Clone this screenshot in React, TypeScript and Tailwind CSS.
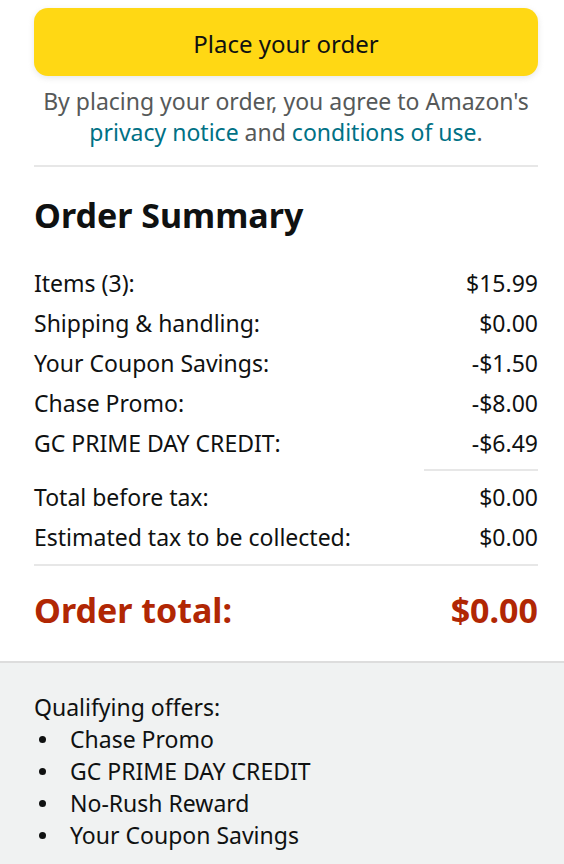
const rows = [
  { label: "Items (3):", value: "$15.99" },
  { label: "Shipping & handling:", value: "$0.00" },
  { label: "Your Coupon Savings:", value: "-$1.50" },
  { label: "Chase Promo:", value: "-$8.00" },
  { label: "GC PRIME DAY CREDIT:", value: "-$6.49" },
];

const taxRows = [
  { label: "Total before tax:", value: "$0.00" },
  { label: "Estimated tax to be collected:", value: "$0.00" },
];

const offers = ["Chase Promo", "GC PRIME DAY CREDIT", "No-Rush Reward", "Your Coupon Savings"];

function Row({ label, value }: { label: string; value: string }) {
  return (
    <div className="flex h-10 items-center justify-between">
      <span>{label}</span>
      <span>{value}</span>
    </div>
  );
}

export default function App(): React.JSX.Element {
  return (
    <div className="min-h-screen bg-white font-['Noto_Sans',sans-serif] text-[23px] text-[#0f1111]">
      <div className="pl-[34px] pr-[26px] pt-2">
        <button className="flex h-[68px] w-full items-center justify-center rounded-[14px] bg-[#ffd814] pt-[3px] text-[24px] shadow-[0_2px_6px_rgba(213,217,217,0.6)]">
          Place your order
        </button>
        <p className="mt-[10px] text-center leading-[31px] text-[#565959]">
          By placing your order, you agree to Amazon's{" "}
          <span className="text-[#007185]">privacy notice</span> and{" "}
          <span className="text-[#007185]">conditions of use</span>.
        </p>
        <div className="mt-[17px] h-[2px] bg-[#e7e7e7]" />

        <h2 className="mt-[26px] text-[34px] font-bold leading-[44px]">Order Summary</h2>

        <div className="mt-[26px]">
          {rows.map((r) => (
            <Row key={r.label} {...r} />
          ))}
        </div>
        <div className="mt-[6px] flex justify-end">
          <div className="h-[2px] w-[114px] bg-[#e7e7e7]" />
        </div>
        <div className="mt-[6px]">
          {taxRows.map((r) => (
            <Row key={r.label} {...r} />
          ))}
        </div>
        <div className="mt-[7px] h-[2px] bg-[#e7e7e7]" />

        <div className="flex h-[95px] items-center justify-between pb-[6px] text-[34px] font-bold text-[#b12704]">
          <span>Order total:</span>
          <span>$0.00</span>
        </div>
      </div>

      <div className="border-t-2 border-[#dddddd] bg-[#f0f2f2] pl-[34px] pr-[26px] pt-[28px] pb-[14px]">
        <p className="leading-8">Qualifying offers:</p>
        <ul>
          {offers.map((o) => (
            <li key={o} className="flex items-center leading-8">
              <span className="flex w-9 pl-[5px]">
                <span className="h-[7px] w-[7px] rounded-full bg-[#0f1111]" />
              </span>
              <span>{o}</span>
            </li>
          ))}
        </ul>
      </div>
    </div>
  );
}
